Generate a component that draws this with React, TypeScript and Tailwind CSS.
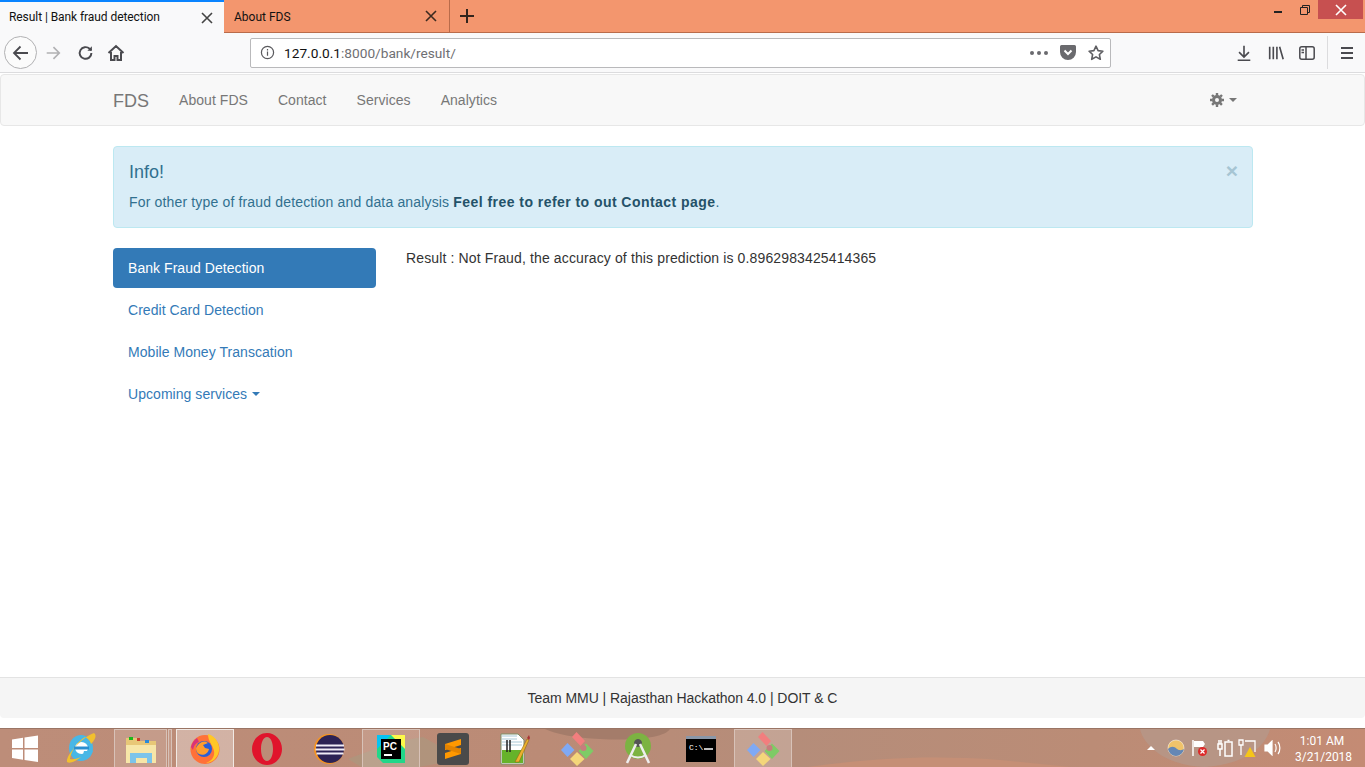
const Caret = ({ className }: { className: string }) => (
  <span className={`inline-block w-0 h-0 border-x-[4px] border-x-transparent border-t-[4px] ${className}`} />
);

const CloseX = ({ color = "#444" }: { color?: string }) => (
  <svg width="12" height="12" viewBox="0 0 12 12" fill="none" stroke={color} strokeWidth="1.6">
    <path d="M1 1l10 10M11 1L1 11" />
  </svg>
);

const ToolIcon = ({ w = 20, children }: { w?: number; children: React.ReactNode }) => (
  <svg width={w} height="20" viewBox="0 0 20 20" fill="none" stroke="#4a4a4f" strokeWidth="1.8">
    {children}
  </svg>
);

function TabBar() {
  return (
    <div className="h-[33px] flex bg-[#f3966e] border-b border-[#b96b4a] font-['Roboto',sans-serif] text-[12px] text-[#111]">
      <div className="w-[224px] h-[33px] bg-[#f9f9fa] border-t-2 border-[#0a84ff] flex items-center justify-between pl-[9px] pr-[11px]">
        <span className="-mt-[2px] tracking-[-0.07px]">Result | Bank fraud detection</span>
        <CloseX />
      </div>
      <div className="w-[226px] flex items-center justify-between pl-[10px] pr-[12px] border-r border-[#b96b4a]">
        <span className="mt-px">About FDS</span>
        <CloseX color="#3c2a20" />
      </div>
      <div className="w-[33px] flex items-center justify-center">
        <svg width="16" height="16" viewBox="0 0 16 16" stroke="#33241c" strokeWidth="2">
          <path d="M8 1v14M1 8h14" />
        </svg>
      </div>
      <div className="ml-auto flex items-start h-[19px]">
        <div className="w-[26px] h-[19px] flex items-center justify-center">
          <div className="w-[8px] h-[2px] mt-[4px] bg-[#222]" />
        </div>
        <div className="w-[27px] h-[19px] flex items-center justify-center">
          <svg width="10" height="10" viewBox="0 0 10 10" fill="none" stroke="#222" strokeWidth="1">
            <path d="M.5 2.500h7v7h-7zM2.500 2.500v-2h7v7h-2" />
          </svg>
        </div>
        <div className="w-[45px] h-[19px] bg-[#c75050] flex items-center justify-center mr-[2px]">
          <CloseX color="#fff" />
        </div>
      </div>
    </div>
  );
}

function Toolbar() {
  return (
    <div className="h-[40px] flex items-center bg-[#f9f9fa] border-b border-[#dcdcde]">
      <div className="w-[33px] h-[33px] ml-[4px] rounded-full border border-[#b1b1b3] bg-[#fbfbfb] flex items-center justify-center">
        <ToolIcon w={20}>
          <path d="M17 10H3M9.500 3.500L3 10l6.500 6.500" />
        </ToolIcon>
      </div>
      <div className="ml-[7px] w-[20px]">
        <svg width="18" height="20" viewBox="0 0 20 20" fill="none" stroke="#b1b1b3" strokeWidth="1.8">
          <path d="M3 10h14M10.500 3.500L17 10l-6.500 6.500" />
        </svg>
      </div>
      <div className="ml-[13px] w-[19px]">
        <ToolIcon w={18}>
          <path d="M16 10a6.500 6.500 0 1 1-2-4.700L16 7" strokeWidth="2.200" />
          <path d="M16.500 2.500V7.500H11.500" fill="#4a4a4f" stroke="none" />
        </ToolIcon>
      </div>
      <div className="ml-[11px] w-[20px]">
        <svg width="18" height="18" viewBox="0 0 18 18" fill="none" stroke="#4a4a4f" strokeWidth="2">
          <path d="M1.500 9L9 2l7.500 7M4 8v8h3.500v-4h3v4H14V8" />
        </svg>
      </div>
      <div className="ml-[123px] w-[861px] h-[30px] bg-white border border-[#b9b9bb] rounded-[2px] flex items-center font-['Roboto',sans-serif] text-[13.7px]">
        <svg className="ml-[9px]" width="15" height="15" viewBox="0 0 16 16" fill="none" stroke="#5a5a5e" strokeWidth="1.3">
          <circle cx="8" cy="8" r="6.500" />
          <path d="M8 7v4.500M8 4.200v1.600" />
        </svg>
        <span className="ml-[9px] text-[#111]">127.0.0.1</span>
        <span className="text-[#6f6f73]">:8000/bank/result/</span>
        <div className="ml-auto flex items-center gap-[3px] mr-[1px]">
          <span className="w-[4px] h-[4px] rounded-full bg-[#6a6a6e]" />
          <span className="w-[4px] h-[4px] rounded-full bg-[#6a6a6e]" />
          <span className="w-[4px] h-[4px] rounded-full bg-[#6a6a6e]" />
        </div>
        <svg className="ml-[11px]" width="16" height="15" viewBox="0 0 16 15">
          <path d="M1.500 0h13A1.500 1.500 0 0 1 16 1.500V7A8 8 0 0 1 0 7V1.500A1.500 1.500 0 0 1 1.500 0z" fill="#6a6a6e" />
          <path d="M4.500 5.500L8 9l3.500-3.500" fill="none" stroke="#fff" strokeWidth="2" />
        </svg>
        <svg className="ml-[12px] mr-[6px]" width="16" height="16" viewBox="0 0 16 16" fill="none" stroke="#5f5f63" strokeWidth="1.6" strokeLinejoin="round">
          <path d="M8 1.200l2.100 4.400 4.800.6-3.500 3.300.9 4.800L8 11.900l-4.300 2.400.9-4.800L1.100 6.200l4.800-.6z" />
        </svg>
      </div>
      <div className="ml-[124px] flex items-center">
        <ToolIcon w={18}>
          <path d="M10 2v12M4.500 9L10 14.500 15.500 9M3 18h14" />
        </ToolIcon>
        <div className="ml-[14px]">
          <ToolIcon w={18}>
            <path d="M3 3v14M7 3v14M11 3v14M14 3l4 14" />
          </ToolIcon>
        </div>
        <div className="ml-[14px]">
          <svg width="16" height="14" viewBox="0 0 16 14" fill="none" stroke="#4a4a4f" strokeWidth="1.5">
            <rect x=".8" y=".8" width="14.400" height="12.400" rx="2" />
            <path d="M7 1v12M2.500 4H5M2.500 6.500H5" />
          </svg>
        </div>
        <div className="ml-[12px] w-px h-[33px] bg-[#dcdcde]" />
        <div className="ml-[13px] flex flex-col gap-[3px]">
          <span className="w-[12px] h-[2px] bg-[#4a4a4f]" />
          <span className="w-[12px] h-[2px] bg-[#4a4a4f]" />
          <span className="w-[12px] h-[2px] bg-[#4a4a4f]" />
        </div>
      </div>
    </div>
  );
}

function Navbar() {
  return (
    <nav className="h-[52px] mt-px bg-[#f8f8f8] border border-[#e7e7e7] rounded-[4px] flex items-center pl-[112px] pr-[127px] text-[#777]">
      <span className="text-[18px] mr-[30px] pt-px">FDS</span>
      <div className="flex gap-[30px] tracking-[0.05px]">
        <span>About FDS</span>
        <span>Contact</span>
        <span>Services</span>
        <span>Analytics</span>
      </div>
      <div className="ml-auto flex items-center gap-[5px]">
        <svg width="14" height="14" viewBox="0 0 14 14">
          <circle cx="7" cy="7" r="3.500" fill="none" stroke="#777" strokeWidth="3" />
          <path d="M7 0v14M0 7h14M2 2l10 10M12 2L2 12" stroke="#777" strokeWidth="2.400" strokeDasharray="2.400 9.200" />
        </svg>
        <Caret className="border-t-[#777]" />
      </div>
    </nav>
  );
}

function Alert() {
  return (
    <div className="h-[82px] mt-5 ml-[113px] mr-[112px] bg-[#d9edf7] border border-[#bce8f1] rounded-[4px] px-[15px] pt-[15px] text-[#31708f] relative">
      <h4 className="text-[18px] leading-[20px]">Info!</h4>
      <p className="mt-[10px] leading-[20px] tracking-[0.16px]">
        For other type of fraud detection and data analysis{" "}
        <strong className="text-[#245269] tracking-[0.45px]">Feel free to refer to out Contact page</strong>.
      </p>
      <span className="absolute right-[14px] top-[13px] text-[21px] leading-[21px] font-bold text-[#a6c5d3]">×</span>
    </div>
  );
}

function Sidebar() {
  return (
    <div className="w-[263px] flex flex-col gap-[2px] text-[#337ab7] tracking-[0.05px]">
      <div className="h-[40px] bg-[#337ab7] text-white rounded-[4px] px-[15px] flex items-center">Bank Fraud Detection</div>
      <div className="h-[40px] px-[15px] flex items-center">Credit Card Detection</div>
      <div className="h-[40px] px-[15px] flex items-center">Mobile Money Transcation</div>
      <div className="h-[40px] px-[15px] flex items-center gap-[5px]">
        Upcoming services
        <Caret className="border-t-[#337ab7]" />
      </div>
    </div>
  );
}

const Slot = ({ active, children }: { active?: string; children: React.ReactNode }) => (
  <div className={`relative w-[58px] mx-[2px] h-full flex items-center justify-center border-x border-t ${active ?? "border-transparent"}`}>
    {children}
  </div>
);

const GitIcon = () => (
  <svg width="33" height="34" viewBox="0 0 33 34">
    <path d="M0 18l6.500-7 7 7-7 7z" fill="#7fa9f5" />
    <path d="M11 5l4.500-5L24 9l-4.500 5z" fill="#f27e7e" />
    <path d="M25 11.500l7.500 7.500-7.500 8-7.500-8z" fill="#7ecb66" />
    <path d="M16 20l7.500 7-7.500 7-7-7z" fill="#f4d67a" />
    <circle cx="22.500" cy="16" r="3" fill="#c77d7d" />
  </svg>
);

function Taskbar() {
  return (
    <div className="h-[39px] relative flex items-stretch bg-[linear-gradient(90deg,#bd8d79_0%,#bb8b76_40%,#b58d7a_58%,#bb8c76_80%,#c48b74_100%)] border-t border-[#9a7565] overflow-hidden">
      <svg className="absolute inset-0" width="1365" height="39" viewBox="0 0 1365 39">
        <path d="M545 0h125c-5 8-30 12-70 10-25-1-45-5-55-10z" fill="#a47c6a" />
        <path d="M348 30c30-12 60-20 75-22l40 22-50 9h-50z" fill="#a99a80" opacity=".6" />
        <path d="M1140 0h130c-5 20-30 36-65 38-35-1-60-18-65-38z" fill="#b5978a" opacity=".8" />
        <path d="M800 39c60-8 120-14 200-8l80 8z" fill="#c58f76" />
      </svg>
      <div className="relative w-[50px] flex items-center justify-center">
        <svg width="28" height="27" viewBox="0 0 28 27" fill="#fff">
          <path d="M1 4.500l11-1.700V13H1zM13.500 2.600L27 .5V13H13.500zM1 14.500h11v10.200L1 23zM13.500 14.500H27V27l-13.500-2.100z" />
        </svg>
      </div>
      <div className="relative w-[62px] flex items-center justify-center">
        <svg width="30" height="32" viewBox="0 0 30 32">
          <ellipse cx="15" cy="16" rx="12" ry="13" fill="#48b7e6" />
          <ellipse cx="15.500" cy="16" rx="6.500" ry="6" fill="#fff" />
          <path d="M8 14.500h15v3H8z" fill="#2a8fd0" />
          <path d="M18 19h9l-3 6-8 1z" fill="#48b7e6" />
          <path d="M1 30C0 23 15 6 28 1c4 3-1 9-3 11-1-4-4-6-6-7C12 9 5 19 4 27c4 1 8-1 11-2-5 4-11 7-14 5z" fill="#f2c02e" />
        </svg>
      </div>
      <div className="relative w-[53px] ml-[2px] border-x border-t border-[#d8c2b8] bg-[#ffffff22] flex items-center justify-center">
        <svg width="32" height="28" viewBox="0 0 32 28">
          <path d="M1 3h12l2 3h16v22H1z" fill="#e8c777" />
          <path d="M1 10h30v18H1z" fill="#f7e6a8" />
          <path d="M4 2h4v3H4z" fill="#1bb81b" />
          <path d="M12 3h3v3h-3z" fill="#c8402a" />
          <path d="M20 5h4v3h-4z" fill="#2a8ad8" />
          <path d="M5 18h22v10h-5v-5H11v5H5z" fill="#7cc4ea" />
        </svg>
      </div>
      <div className="relative w-[4px] ml-px border-x border-t border-[#d8c2b8] bg-[#ffffff22]" />
      <div className="w-[2px]" />
      <Slot active="border-[#f1e9e4] bg-[#ffffff55]">
        <svg width="30" height="31" viewBox="0 0 30 31">
          <circle cx="15" cy="16.500" r="14.500" fill="#ff7139" />
          <path d="M18 1c9 3 12 11 11 17-1 7-7 12-13 12 6-2 9-7 8-12-1-6-6-9-6-17z" fill="#ffc726" />
          <circle cx="14" cy="16" r="8" fill="#2a5ed6" />
          <path d="M6 15c3-6 8-8 12-5l-5 2 2 3 4 1c-1 5-6 7-10 5-2-1-3-3-3-6z" fill="#ff9d2e" />
          <path d="M1 14c1-4 3-7 6-9l2 4c-3 1-5 3-6 8z" fill="#d8327b" />
        </svg>
      </Slot>
      <Slot>
        <svg width="30" height="32" viewBox="0 0 30 32">
          <path fillRule="evenodd" d="M15 0c8.300 0 15 7.200 15 16s-6.700 16-15 16S0 24.800 0 16 6.700 0 15 0zm0 4c-3.600 0-6 5.400-6 12s2.400 12 6 12 6-5.400 6-12-2.400-12-6-12z" fill="#e0142c" />
        </svg>
      </Slot>
      <Slot>
        <svg width="32" height="30" viewBox="0 0 32 30">
          <circle cx="16" cy="15" r="15" fill="#f7941e" />
          <circle cx="17" cy="15" r="14" fill="#2c2255" />
          <path d="M3 10.500h28v2H3zM2.500 14.500h29v2h-29zM3.500 18.500h27v2h-27z" fill="#f0ecf7" />
        </svg>
      </Slot>
      <Slot active="border-[#d8c2b8] bg-[#ffffff22]">
        <svg width="28" height="28" viewBox="0 0 28 28">
          <path d="M0 0h22l6 8v20H6L0 22z" fill="#21d789" />
          <path d="M14 0h14v14z" fill="#fcf84a" />
          <path d="M0 0h14L0 14z" fill="#07c3f2" />
          <rect x="4" y="4" width="20" height="20" fill="#000" />
          <path d="M7 19h8v2H7z" fill="#fff" />
          <text x="6" y="15" fill="#fff" fontSize="10" fontWeight="700" fontFamily="Liberation Sans, sans-serif">PC</text>
        </svg>
      </Slot>
      <Slot>
        <svg width="32" height="32" viewBox="0 0 32 32">
          <rect width="32" height="32" rx="3" fill="#4a4a4a" />
          <path d="M24 6v6L8 17v-6zM24 15v6L8 26v-6z" fill="#ff9800" />
          <path d="M8 11l16 5v5L8 16z" fill="#e38300" />
        </svg>
      </Slot>
      <Slot>
        <svg width="30" height="32" viewBox="0 0 30 32">
          <path d="M1 1h17l6 6v24H1z" fill="#fff" stroke="#7a8f6a" />
          <path d="M2 17h21v13H2z" fill="#66b32a" />
          <path d="M2 3h15M2 6h15M2 9h20M2 12h20" stroke="#a9c9d6" />
          <path d="M7 7v12M10 7v12" stroke="#222" strokeWidth="1.500" />
          <path d="M15 29L27 6l2 1L19 29z" fill="#eab22e" stroke="#8a5a10" strokeWidth=".5" />
          <path d="M27 5l2-3 1 3-1 2z" fill="#a33" />
        </svg>
      </Slot>
      <Slot>
        <GitIcon />
      </Slot>
      <Slot>
        <svg width="30" height="32" viewBox="0 0 30 32">
          <circle cx="14" cy="13" r="13" fill="#7cb342" />
          <circle cx="14" cy="10" r="3.500" fill="#555" stroke="#555" />
          <path d="M12 11L3 30M16 11l9 19" stroke="#eee" strokeWidth="2.500" />
          <path d="M6 22c5 3 11 3 16 0" stroke="#eee" strokeWidth="2" fill="none" />
        </svg>
      </Slot>
      <Slot>
        <svg width="30" height="26" viewBox="0 0 30 26">
          <rect width="30" height="26" fill="#000" />
          <rect width="30" height="3" fill="#8a97a8" />
          <text x="3" y="14" fill="#fff" fontSize="8" fontFamily="Liberation Mono, monospace">C:\</text>
          <path d="M18 13h9" stroke="#fff" strokeWidth="1.500" />
        </svg>
      </Slot>
      <Slot active="border-[#d8c2b8] bg-[#ffffff33]">
        <GitIcon />
      </Slot>
      <div className="relative ml-auto flex items-center text-white font-['Roboto',sans-serif] text-[12px]">
        <Caret className="rotate-180 border-t-white mr-[12px]" />
        <svg width="18" height="18" viewBox="0 0 18 18">
          <circle cx="9" cy="9" r="8" fill="#f0c36a" stroke="#fff" strokeWidth=".5" />
          <path d="M1 10c3-3 6-3 9 0 3 2 5 1 7 0-1 4-4 7-8 7s-7-3-8-7z" fill="#6487b5" />
        </svg>
        <svg className="ml-[6px]" width="17" height="18" viewBox="0 0 17 18">
          <path d="M2 1v16" stroke="#fff" strokeWidth="1.500" />
          <path d="M3 2h9l2 3-2 3H3z" fill="#fff" />
          <circle cx="11.500" cy="12.500" r="4.500" fill="#dd2a2a" />
          <path d="M9.500 10.500l4 4M13.500 10.500l-4 4" stroke="#fff" strokeWidth="1.200" />
        </svg>
        <svg className="ml-[9px]" width="16" height="18" viewBox="0 0 16 18" fill="none" stroke="#fff" strokeWidth="1.500">
          <path d="M1 5h4v5H1zM2 1v4M4 1v4M3 10v7" />
          <rect x="8" y="3" width="7" height="14" />
          <path d="M10.500 1.500h2" />
        </svg>
        <svg className="ml-[5px]" width="19" height="20" viewBox="0 0 19 20" fill="none" stroke="#fff" strokeWidth="1.300">
          <path d="M1 2h4v5H1zM3 7v10M7 3h10v11" />
          <path d="M12 9l-5.500 10h11z" fill="#f5c518" stroke="none" />
        </svg>
        <svg className="ml-[7px]" width="17" height="16" viewBox="0 0 17 16" fill="none" stroke="#fff" strokeWidth="1.200">
          <path d="M1 5h3l4-4v14l-4-4H1z" fill="#fff" />
          <path d="M11 4c1.500 2 1.500 6 0 8M14 2c2.500 3 2.500 9 0 12" />
        </svg>
        <div className="ml-[14px] mr-[16px] w-[54px] text-center leading-[16px] pt-px">
          <div>1:01 AM</div>
          <div className="whitespace-nowrap">3/21/2018</div>
        </div>
      </div>
    </div>
  );
}

export default function App() {
  return (
    <div className="w-[1365px] h-[767px] overflow-hidden flex flex-col bg-white font-['Liberation_Sans',sans-serif] text-[14px] leading-[20px] text-[#333]">
      <TabBar />
      <Toolbar />
      <Navbar />
      <Alert />
      <div className="flex-1 flex mt-5 mx-[113px]">
        <Sidebar />
        <p className="ml-[30px] tracking-[0.13px]">Result : Not Fraud, the accuracy of this prediction is 0.8962983425414365</p>
      </div>
      <footer className="h-[41px] bg-[#f5f5f5] border-t border-[#e3e3e3] rounded-b-[4px] flex items-center justify-center tracking-[-0.05px]">
        Team MMU | Rajasthan Hackathon 4.0 | DOIT &amp; C
      </footer>
      <div className="h-[10px]" />
      <Taskbar />
    </div>
  );
}
